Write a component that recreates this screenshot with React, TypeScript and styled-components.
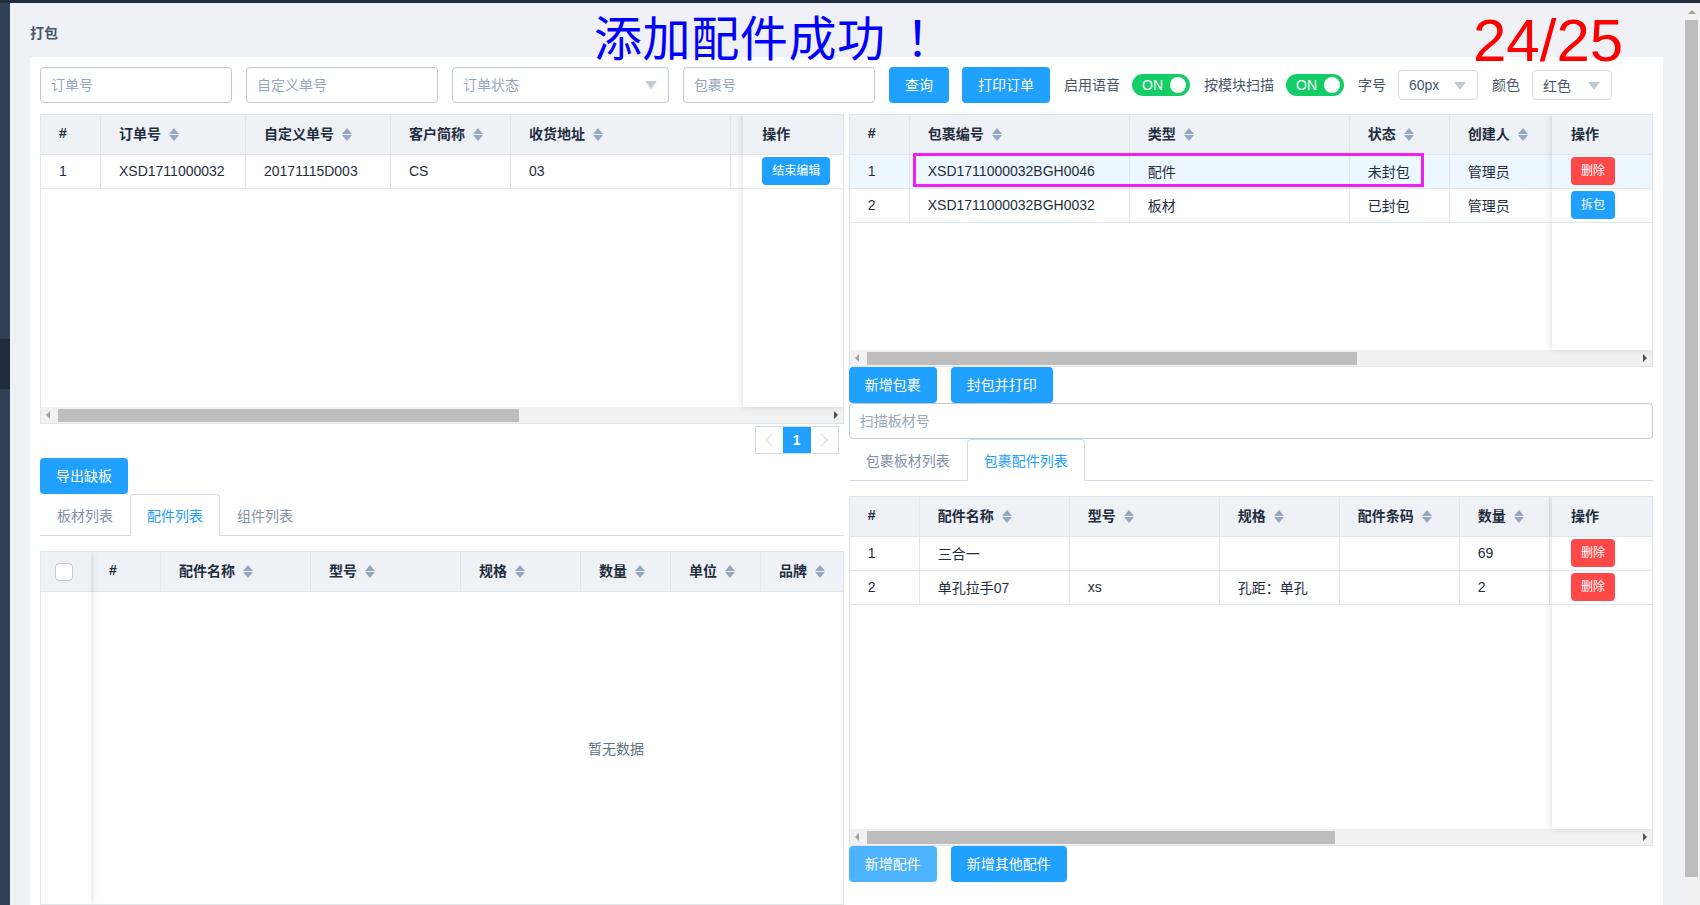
import React from 'react';
import styled, { createGlobalStyle } from 'styled-components';

const GlobalStyle = createGlobalStyle`
  html, body {
    margin: 0;
    height: 100%;
    overflow: hidden;
  }
  body {
    font-family: "Liberation Sans", "Noto Sans CJK SC", sans-serif;
    font-size: 14px;
    color: #48576a;
  }
  * {
    box-sizing: border-box;
  }
`;

const Shell = styled.div`
  position: relative;
  display: flex;
  flex-direction: column;
  height: 905px;
  background: #eff1f6;
  overflow: hidden;
`;

const TopBar = styled.div`
  height: 3px;
  flex-shrink: 0;
  background: #1f2d3d;
`;

const Body = styled.div`
  display: flex;
  flex: 1;
  min-height: 0;
`;

const Sidebar = styled.div`
  width: 10px;
  flex-shrink: 0;
  padding-top: 336px;
  background: #304156;
`;

const SidebarActive = styled.div`
  height: 50px;
  background: #1f2d3d;
`;

const Main = styled.div`
  flex: 1;
  min-width: 0;
  padding: 0 20px;
`;

const PageTitle = styled.div`
  height: 54px;
  line-height: 60px;
  font-size: 14px;
  font-weight: 700;
  color: #48576a;
`;

const Panel = styled.div`
  height: 850px;
  padding: 10px 10.5px 0 10px;
  background: #fff;
`;

const Toolbar = styled.div`
  display: flex;
  align-items: center;
  height: 36px;
  margin-bottom: 11px;
`;

const TextInput = styled.input<{ $width?: number }>`
  display: block;
  width: ${p => (p.$width ? `${p.$width}px` : '100%')};
  height: 36px;
  margin-right: 14px;
  padding: 0 10px;
  border: 1px solid #bfcbd9;
  border-radius: 4px;
  background: #fff;
  font: inherit;
  color: #1f2d3d;
  outline: none;
  flex-shrink: 0;
  &::placeholder {
    color: #97a8be;
  }
`;

const ScanInput = styled(TextInput)`
  margin-right: 0;
`;

const SelectBox = styled.div<{ $width: number; $height: number; $muted?: boolean }>`
  display: flex;
  align-items: center;
  justify-content: space-between;
  flex-shrink: 0;
  width: ${p => p.$width}px;
  height: ${p => p.$height}px;
  margin-right: ${p => (p.$muted ? 14 : 0)}px;
  padding: 0 11px ${p => (p.$muted ? 2 : 0)}px 10px;
  border: 1px solid ${p => (p.$muted ? '#bfcbd9' : '#d1dbe5')};
  border-radius: 4px;
  color: ${p => (p.$muted ? '#97a8be' : '#48576a')};
`;

const SelectArrow = styled.span`
  width: 0;
  height: 0;
  margin-top: 2px;
  border-left: 6px solid transparent;
  border-right: 6px solid transparent;
  border-top: 8px solid #bfcbd9;
`;

const Button = styled.button<{ $color?: string; $small?: boolean; $width?: number }>`
  display: block;
  flex-shrink: 0;
  width: ${p => (p.$width ? `${p.$width}px` : 'auto')};
  height: ${p => (p.$small ? 28 : 36)}px;
  padding: 0 0 2px;
  border: 0;
  border-radius: 4px;
  background: ${p => p.$color ?? '#20a0ff'};
  color: #fff;
  font-family: inherit;
  font-size: ${p => (p.$small ? 12 : 14)}px;
  text-align: center;
`;

const QueryButton = styled(Button)`
  margin-right: 13px;
`;

const SettingLabel = styled.span`
  flex-shrink: 0;
  margin: 0 12px 2px 14px;
  white-space: nowrap;
`;

const Switch = styled.div`
  display: flex;
  align-items: center;
  justify-content: space-between;
  flex-shrink: 0;
  width: 58px;
  height: 22px;
  padding: 0 4px 0 10px;
  border-radius: 11px;
  background: #13ce66;
  color: #fff;
  line-height: 22px;
`;

const SwitchKnob = styled.span`
  width: 16px;
  height: 16px;
  border-radius: 50%;
  background: #fff;
`;

const Columns = styled.div`
  display: grid;
  grid-template-columns: 1fr 1fr;
  column-gap: 5px;
`;

const Column = styled.div`
  display: flex;
  flex-direction: column;
  min-width: 0;
`;

const TableBox = styled.div<{ $height: number }>`
  position: relative;
  display: flex;
  flex-direction: column;
  flex-shrink: 0;
  height: ${p => p.$height}px;
  border: 1px solid #dfe6ec;
  background: #fff;
  overflow: hidden;
`;

const TablePane = styled.div`
  display: flex;
  flex: 1;
  min-height: 0;
`;

const ScrollContent = styled.div`
  flex: 1;
  min-width: 0;
  overflow: hidden;
`;

const FixedColumn = styled.div<{ $width: number; $side: 'left' | 'right' }>`
  position: relative;
  flex-shrink: 0;
  width: ${p => p.$width}px;
  background: #fff;
  box-shadow: ${p => (p.$side === 'right' ? '-1px 0 6px rgba(0, 0, 0, 0.12)' : '1px 0 6px rgba(0, 0, 0, 0.12)')};
`;

const HeadRow = styled.div<{ $cols: string }>`
  display: grid;
  grid-template-columns: ${p => p.$cols};
  height: 40px;
  background: #eef1f6;
  border-bottom: 1px solid #dfe6ec;
`;

const BodyRow = styled.div<{ $cols: string; $active?: boolean }>`
  display: grid;
  grid-template-columns: ${p => p.$cols};
  height: 34px;
  background: ${p => (p.$active ? '#edf7ff' : '#fff')};
  border-bottom: 1px solid #dfe6ec;
`;

const HeadCell = styled.div<{ $plain?: boolean }>`
  display: flex;
  align-items: center;
  gap: 8px;
  min-width: 0;
  padding-left: ${p => (p.$plain ? 19.5 : 18)}px;
  padding-bottom: 4px;
  border-right: ${p => (p.$plain ? '0' : '1px solid #dfe6ec')};
  color: #1f2d3d;
  font-weight: 700;
  white-space: nowrap;
`;

const BodyCell = styled.div<{ $plain?: boolean }>`
  display: flex;
  align-items: center;
  min-width: 0;
  padding-left: ${p => (p.$plain ? 19.5 : 18)}px;
  padding-bottom: 2px;
  border-right: ${p => (p.$plain ? '0' : '1px solid #dfe6ec')};
  color: #1f2d3d;
  white-space: nowrap;
`;

const SortIcon = styled.span`
  display: flex;
  flex-direction: column;
  gap: 1px;
  margin-top: 3px;
  &::before,
  &::after {
    content: '';
    width: 0;
    height: 0;
    border-left: 5px solid transparent;
    border-right: 5px solid transparent;
  }
  &::before {
    border-bottom: 6px solid #97a8be;
  }
  &::after {
    border-top: 6px solid #97a8be;
  }
`;

const CheckCell = styled.div`
  display: flex;
  align-items: center;
  justify-content: center;
  height: 40px;
  padding-right: 4px;
  background: #eef1f6;
  border-bottom: 1px solid #dfe6ec;
`;

const CheckBox = styled.span`
  width: 18px;
  height: 18px;
  border: 1px solid #bfcbd9;
  border-radius: 4px;
  background: #fff;
`;

const EmptyText = styled.div`
  display: flex;
  align-items: center;
  justify-content: center;
  width: 1050px;
  height: 312px;
  color: #5e7382;
`;

const ScrollTrack = styled.div`
  display: flex;
  align-items: center;
  flex-shrink: 0;
  height: 16px;
  padding: 0 5px;
  background: #f1f1f1;
`;

const ScrollArrow = styled.span<{ $dir: 'left' | 'right' }>`
  width: 0;
  height: 0;
  border-top: 4px solid transparent;
  border-bottom: 4px solid transparent;
  ${p => (p.$dir === 'left' ? 'border-right: 4px solid #a3a3a3;' : 'border-left: 4px solid #505050; margin-left: auto;')}
`;

const ScrollThumb = styled.span<{ $width: number }>`
  display: block;
  width: ${p => p.$width}px;
  height: 13px;
  margin-left: 8px;
  background: #bdbdbd;
`;

const Highlight = styled.div`
  position: absolute;
  top: 38px;
  left: 63.5px;
  width: 511px;
  height: 34px;
  border: 3px solid #f01ef0;
  pointer-events: none;
`;

const Pager = styled.div`
  display: flex;
  align-self: flex-end;
  height: 28px;
  margin: 2px 5px 4px 0;
  border: 1px solid #d1dbe5;
  background: #fff;
`;

const PagerButton = styled.span`
  display: flex;
  align-items: center;
  justify-content: center;
  width: 27px;
  color: #e4e4e4;
`;

const PagerCurrent = styled(PagerButton)`
  width: 28px;
  background: #20a0ff;
  color: #fff;
  font-weight: 700;
`;

const TabBar = styled.div`
  display: flex;
  flex-shrink: 0;
  height: 42px;
  margin-bottom: 15px;
  border-bottom: 1px solid #d1dbe5;
`;

const Tab = styled.div<{ $active?: boolean }>`
  display: flex;
  align-items: center;
  height: 42px;
  padding: 0 16px;
  border: 1px solid ${p => (p.$active ? '#d1dbe5' : 'transparent')};
  border-bottom: 1px solid ${p => (p.$active ? '#fff' : 'transparent')};
  border-radius: 4px 4px 0 0;
  color: ${p => (p.$active ? '#20a0ff' : '#8391a5')};
  white-space: nowrap;
`;

const ActionRow = styled.div`
  display: flex;
  flex-shrink: 0;
  gap: 14px;
`;

const PageScrollbar = styled.div`
  display: flex;
  flex-direction: column;
  align-items: center;
  flex-shrink: 0;
  width: 17px;
  padding-top: 7px;
  background: #f1f1f1;
`;

const PageScrollArrow = styled.span`
  width: 0;
  height: 0;
  margin-bottom: 6px;
  border-left: 4px solid transparent;
  border-right: 4px solid transparent;
  border-bottom: 4px solid #a3a3a3;
`;

const PageScrollThumb = styled.div`
  width: 13px;
  height: 857px;
  background: #bdbdbd;
`;

const Message = styled.div`
  position: absolute;
  top: 14px;
  left: 594px;
  font-size: 48px;
  line-height: 52px;
  letter-spacing: 0.6px;
  color: #0000ff;
  white-space: nowrap;
`;

const MessageMark = styled.span`
  margin-left: 20px;
`;

const Counter = styled.div`
  position: absolute;
  top: 7px;
  left: 1473px;
  font-size: 60px;
  line-height: 68px;
  color: #ff0000;
  white-space: nowrap;
`;

interface TableColumn {
  title: string;
  sortable?: boolean;
}

interface DataTableProps {
  height: number;
  cols: string;
  columns: TableColumn[];
  rows?: React.ReactNode[][];
  activeRow?: number;
  fixedRight?: React.ReactNode[];
  fixedLeft?: boolean;
  thumb?: number;
  children?: React.ReactNode;
}

const DataTable = ({
  height,
  cols,
  columns,
  rows = [],
  activeRow,
  fixedRight,
  fixedLeft,
  thumb,
  children,
}: DataTableProps) => (
  <TableBox $height={height}>
    <TablePane>
      {fixedLeft && (
        <FixedColumn $width={50} $side="left">
          <CheckCell>
            <CheckBox />
          </CheckCell>
        </FixedColumn>
      )}
      <ScrollContent>
        <HeadRow $cols={cols}>
          {columns.map((c, i) => (
            <HeadCell key={i}>
              {c.title}
              {c.sortable && <SortIcon />}
            </HeadCell>
          ))}
        </HeadRow>
        {rows.map((row, i) => (
          <BodyRow key={i} $cols={cols} $active={i === activeRow}>
            {row.map((cell, j) => (
              <BodyCell key={j}>{cell}</BodyCell>
            ))}
          </BodyRow>
        ))}
        {children}
      </ScrollContent>
      {fixedRight && (
        <FixedColumn $width={100} $side="right">
          <HeadRow $cols="1fr">
            <HeadCell $plain>操作</HeadCell>
          </HeadRow>
          {fixedRight.map((action, i) => (
            <BodyRow key={i} $cols="1fr" $active={i === activeRow}>
              <BodyCell $plain>{action}</BodyCell>
            </BodyRow>
          ))}
        </FixedColumn>
      )}
    </TablePane>
    {thumb && (
      <ScrollTrack>
        <ScrollArrow $dir="left" />
        <ScrollThumb $width={thumb} />
        <ScrollArrow $dir="right" />
      </ScrollTrack>
    )}
    {activeRow !== undefined && <Highlight />}
  </TableBox>
);

const sortCols = (titles: string[]): TableColumn[] =>
  titles.map((title, i) => ({ title, sortable: i > 0 }));

const PagerChevron = ({ flip }: { flip?: boolean }) => (
  <svg width="10" height="16" viewBox="0 0 10 16" fill="none" stroke="currentColor" strokeWidth="1.6">
    <polyline points={flip ? '2,2 8,8 2,14' : '8,2 2,8 8,14'} />
  </svg>
);

export default function App() {
  return (
    <>
      <GlobalStyle />
      <Shell>
        <TopBar />
        <Body>
          <Sidebar>
            <SidebarActive />
          </Sidebar>
          <Main>
            <PageTitle>打包</PageTitle>
            <Panel>
              <Toolbar>
                <TextInput $width={192} placeholder="订单号" />
                <TextInput $width={192} placeholder="自定义单号" />
                <SelectBox $width={217} $height={36} $muted>
                  订单状态
                  <SelectArrow />
                </SelectBox>
                <TextInput $width={192} placeholder="包裹号" />
                <QueryButton $width={60}>查询</QueryButton>
                <Button $width={88}>打印订单</Button>
                <SettingLabel>启用语音</SettingLabel>
                <Switch>
                  ON
                  <SwitchKnob />
                </Switch>
                <SettingLabel>按模块扫描</SettingLabel>
                <Switch>
                  ON
                  <SwitchKnob />
                </Switch>
                <SettingLabel>字号</SettingLabel>
                <SelectBox $width={80} $height={30}>
                  60px
                  <SelectArrow />
                </SelectBox>
                <SettingLabel>颜色</SettingLabel>
                <SelectBox $width={80} $height={30}>
                  红色
                  <SelectArrow />
                </SelectBox>
              </Toolbar>
              <Columns>
                <Column>
                  <DataTable
                    height={310}
                    cols="60px 145px 145px 120px 220px 12px"
                    columns={[...sortCols(['#', '订单号', '自定义单号', '客户简称', '收货地址']), { title: '' }]}
                    rows={[['1', 'XSD1711000032', '20171115D003', 'CS', '03', '']]}
                    fixedRight={[<Button $small $width={68}>结束编辑</Button>]}
                    thumb={461}
                  />
                  <Pager>
                    <PagerButton>
                      <PagerChevron />
                    </PagerButton>
                    <PagerCurrent>1</PagerCurrent>
                    <PagerButton>
                      <PagerChevron flip />
                    </PagerButton>
                  </Pager>
                  <ActionRow>
                    <Button $width={88}>导出缺板</Button>
                  </ActionRow>
                  <TabBar>
                    <Tab>板材列表</Tab>
                    <Tab $active>配件列表</Tab>
                    <Tab>组件列表</Tab>
                  </TabBar>
                  <DataTable
                    height={354}
                    cols="70px 150px 150px 120px 90px 90px 90px"
                    fixedLeft
                    columns={sortCols(['#', '配件名称', '型号', '规格', '数量', '单位', '品牌'])}
                  >
                    <EmptyText>暂无数据</EmptyText>
                  </DataTable>
                </Column>
                <Column>
                  <DataTable
                    height={253}
                    cols="60px 220px 220px 100px 103px"
                    columns={sortCols(['#', '包裹编号', '类型', '状态', '创建人'])}
                    rows={[
                      ['1', 'XSD1711000032BGH0046', '配件', '未封包', '管理员'],
                      ['2', 'XSD1711000032BGH0032', '板材', '已封包', '管理员'],
                    ]}
                    activeRow={0}
                    fixedRight={[
                      <Button $small $width={44} $color="#ff4949">删除</Button>,
                      <Button $small $width={44}>拆包</Button>,
                    ]}
                    thumb={490}
                  />
                  <ActionRow>
                    <Button $width={88}>新增包裹</Button>
                    <Button $width={102}>封包并打印</Button>
                  </ActionRow>
                  <ScanInput placeholder="扫描板材号" />
                  <TabBar>
                    <Tab>包裹板材列表</Tab>
                    <Tab $active>包裹配件列表</Tab>
                  </TabBar>
                  <DataTable
                    height={350}
                    cols="70px 150px 150px 120px 120px 90px 3px"
                    columns={[...sortCols(['#', '配件名称', '型号', '规格', '配件条码', '数量']), { title: '' }]}
                    rows={[
                      ['1', '三合一', '', '', '', '69', ''],
                      ['2', '单孔拉手07', 'xs', '孔距：单孔', '', '2', ''],
                    ]}
                    fixedRight={[
                      <Button $small $width={44} $color="#ff4949">删除</Button>,
                      <Button $small $width={44} $color="#ff4949">删除</Button>,
                    ]}
                    thumb={468}
                  />
                  <ActionRow>
                    <Button $width={88} $color="#4db3ff">新增配件</Button>
                    <Button $width={116}>新增其他配件</Button>
                  </ActionRow>
                </Column>
              </Columns>
            </Panel>
          </Main>
          <PageScrollbar>
            <PageScrollArrow />
            <PageScrollThumb />
          </PageScrollbar>
        </Body>
        <Message>
          添加配件成功
          <MessageMark>！</MessageMark>
        </Message>
        <Counter>24/25</Counter>
      </Shell>
    </>
  );
}
